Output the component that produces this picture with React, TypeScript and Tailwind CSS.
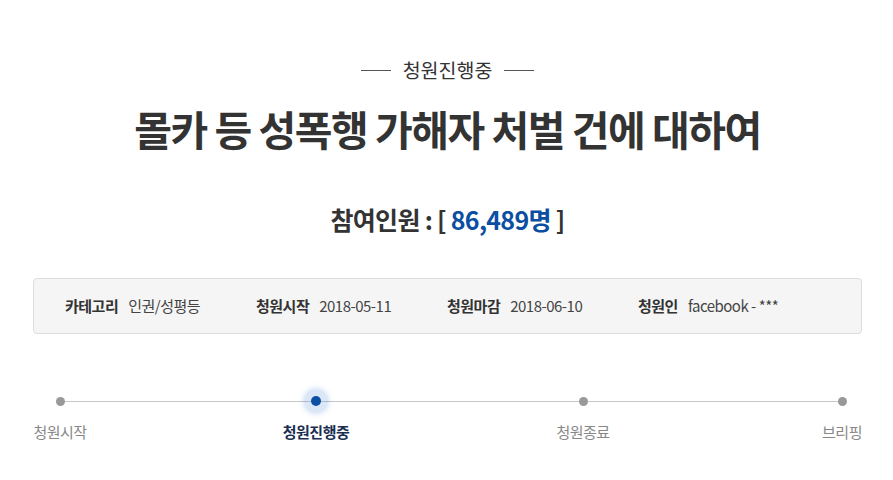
import React from "react";

const font = { fontFamily: '"Noto Sans CJK KR", "Noto Sans", sans-serif' };

const info = [
  { k: "카테고리", v: "인권/성평등" },
  { k: "청원시작", v: "2018-05-11" },
  { k: "청원마감", v: "2018-06-10" },
  { k: "청원인", v: "facebook - ***" },
];

function Dot({ active }: { active?: boolean }) {
  return (
    <div className="h-[22px] flex items-center justify-center">
      {active ? (
        <span className="w-[22px] h-[22px] rounded-full bg-[#0b5cc8]/15 flex items-center justify-center shadow-[0_0_7px_rgba(11,92,200,0.35)]">
          <span className="w-[10px] h-[10px] rounded-full bg-[#0b4ea2]" />
        </span>
      ) : (
        <span className="w-[9px] h-[9px] rounded-full bg-[#999]" />
      )}
    </div>
  );
}

export default function App() {
  return (
    <div className="w-[893px] h-[480px] bg-white overflow-hidden text-[#333]" style={font}>
      <div className="pl-[33px] pr-[31px] pt-[57px]">
        {/* status */}
        <div className="flex items-center justify-center gap-3">
          <span className="w-[30px] h-px bg-[#555]" />
          <span className="text-[19.5px] leading-[26px] text-[#333]">청원진행중</span>
          <span className="w-[30px] h-px bg-[#555]" />
        </div>

        {/* title */}
        <h1 className="mt-[19px] text-center text-[41px] leading-[52px] font-bold tracking-[-1.5px] text-[#333] whitespace-nowrap">
          몰카 등 성폭행 가해자 처벌 건에 대하여
        </h1>

        {/* count */}
        <p className="mt-[47px] text-center text-[25px] leading-[36px] font-bold tracking-[-0.7px] text-[#333]">
          참여인원 : [ <span className="text-[#0b4ea2]">86,489명</span> ]
        </p>

        {/* info box */}
        <div className="mt-[41px] h-[56px] border border-[#ddd] rounded-[4px] bg-[#f5f5f5] flex items-center pl-[31px] text-[15px] tracking-[-0.5px]">
          {info.map((i, idx) => (
            <div key={i.k} className={`flex items-center gap-[10px] ${idx < 3 ? "w-[191px]" : ""}`}>
              <span className="font-bold text-[#333]">{i.k}</span>
              <span className="text-[#444]">{i.v}</span>
            </div>
          ))}
        </div>

        {/* timeline */}
        <div className="relative mt-[56px]">
          <div className="absolute left-[27px] right-[20px] top-[11px] h-px bg-[#c8c8c8]" />
          <div className="relative flex text-[15px] leading-[20px] tracking-[-0.5px] whitespace-nowrap">
            <div className="w-[54px] flex flex-col items-center">
              <Dot />
              <span className="mt-[10px] text-[#888]">청원시작</span>
            </div>
            <div className="ml-[189px] w-[80px] flex flex-col items-center">
              <Dot active />
              <span className="mt-[10px] font-bold text-[#1b2f52]">청원진행중</span>
            </div>
            <div className="ml-[187px] w-[80px] flex flex-col items-center">
              <Dot />
              <span className="mt-[10px] text-[#888]">청원종료</span>
            </div>
            <div className="ml-auto w-[40px] flex flex-col items-center">
              <Dot />
              <span className="mt-[10px] text-[#888]">브리핑</span>
            </div>
          </div>
        </div>
      </div>
    </div>
  );
}
